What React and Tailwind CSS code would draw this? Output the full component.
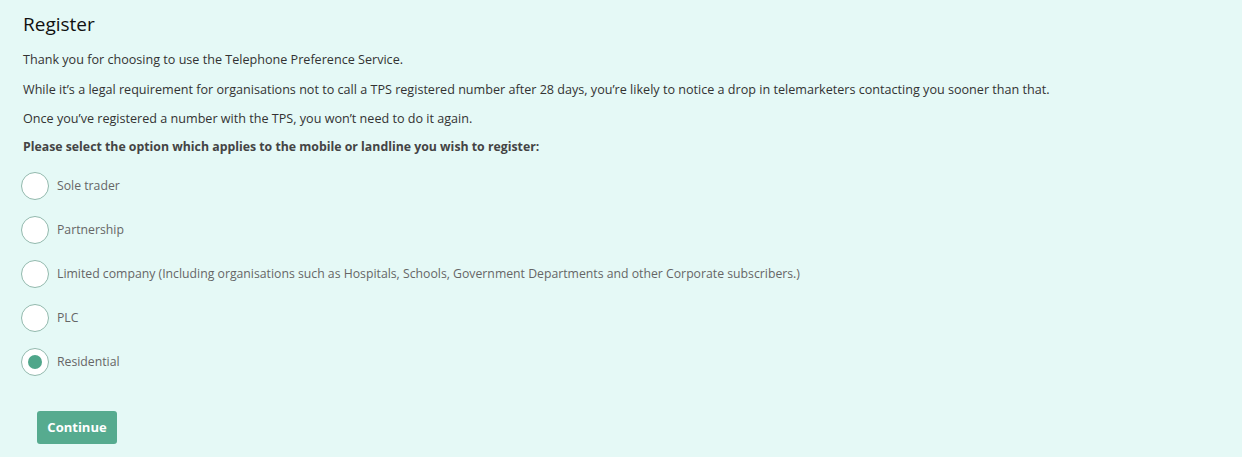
import React, { useState } from "react";

const options = [
  "Sole trader",
  "Partnership",
  "Limited company (Including organisations such as Hospitals, Schools, Government Departments and other Corporate subscribers.)",
  "PLC",
  "Residential",
];

export default function App() {
  const [sel, setSel] = useState(4);
  return (
    <div
      className="min-h-[457px] w-full bg-[#e5f9f6] px-[23px] pt-[12px] text-[12.6px] text-[#333333]"
      style={{ fontFamily: '"Open Sans", "Noto Sans", sans-serif' }}
    >
      <h1 className="text-[19px] leading-[24px] font-normal text-[#111111]">Register</h1>
      <p className="mt-[14px] leading-[20px]">Thank you for choosing to use the Telephone Preference Service.</p>
      <p className="mt-[10px] leading-[20px]">
        While it’s a legal requirement for organisations not to call a TPS registered number after 28 days, you’re likely to notice a drop in telemarketers contacting you sooner than that.
      </p>
      <p className="mt-[9px] leading-[20px]">Once you’ve registered a number with the TPS, you won’t need to do it again.</p>
      <p className="mt-[8px] leading-[20px] text-[12.3px] font-bold text-[#444444]">
        Please select the option which applies to the mobile or landline you wish to register:
      </p>
      <div className="mt-[15px] ml-[-2px] flex flex-col gap-[16px]">
        {options.map((o, i) => (
          <label key={i} className="flex items-center gap-[8px] cursor-pointer" onClick={() => setSel(i)}>
            <span className="flex h-[28px] w-[28px] shrink-0 items-center justify-center rounded-full border-[1.5px] border-[#92b9ad] bg-white">
              {sel === i && <span className="h-[14px] w-[14px] rounded-full bg-[#4fa68a]" />}
            </span>
            <span className="text-[12.25px] leading-[20px] text-[#666666]">{o}</span>
          </label>
        ))}
      </div>
      <button className="mt-[35px] ml-[14px] h-[33px] w-[80px] rounded-[3px] bg-[#56ab8f] text-[13px] font-bold text-white">
        Continue
      </button>
    </div>
  );
}
